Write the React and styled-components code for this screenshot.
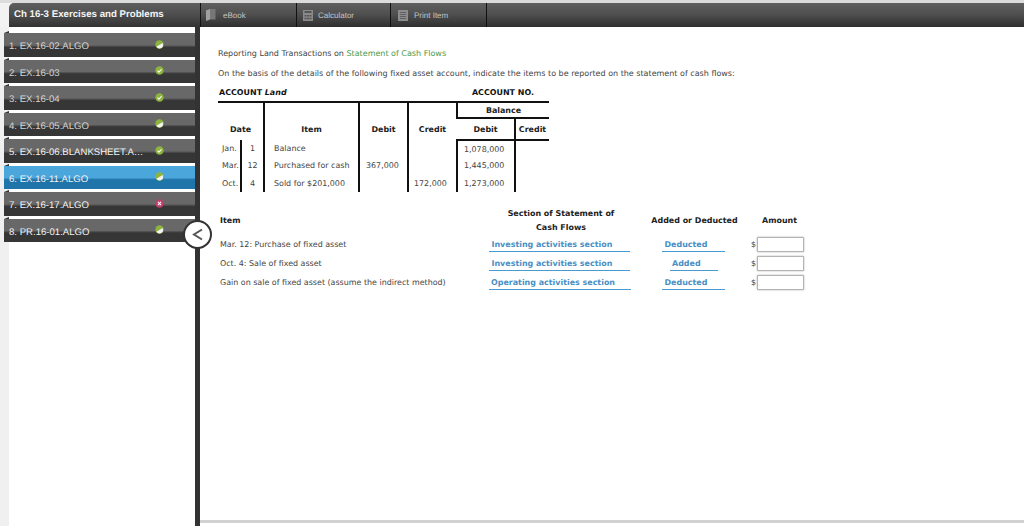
import React from "react";
import styled, { createGlobalStyle } from "styled-components";

const Global = createGlobalStyle`
  html, body { margin: 0; padding: 0; background: #fff; width: 1024px; height: 526px; overflow: hidden; text-rendering: geometricPrecision; }
  * { box-sizing: border-box; }
`;
const Page = styled.div`
  width: 1024px; height: 526px; display: flex; flex-direction: column;
  background: #fff; font-family: "DejaVu Sans", Verdana, sans-serif; color: #333;
`;
const TopStrip = styled.div`height: 3px; background: #dcdcdc; flex: none;`;
const HeaderRow = styled.div`
  height: 24px; flex: none; display: flex; padding-left: 9px; background: #f2f2f2;
`;
const CourseTitle = styled.div`
  width: 191px; border-radius: 5px 0 0 0; background: linear-gradient(#5f5f5f, #4f4f4f 45%, #333 100%);
  color: #f4f4f4; font: bold 9.700px/23px "Liberation Sans", Arial, sans-serif; padding-left: 5px; flex: none;
`;
const Toolbar = styled.div`
  flex: 1; display: flex; background: linear-gradient(#606060, #505050 45%, #2e2e2e 100%); border-left: 1px solid #111;
`;
const Tool = styled.div`
  width: ${p => p.$w}px; display: flex; align-items: center; gap: ${p => p.$gap}px; padding-left: ${p => p.$pad}px;
  border-right: 1px solid #111; color: #c4c4c4; font: 8px "Liberation Sans", Arial, sans-serif;
`;
const Body = styled.div`flex: 1; display: flex; min-height: 0; position: relative;`;
const Sidebar = styled.nav`
  width: 200px; flex: none; display: flex; flex-direction: column; border-right: 5px solid #333;
  background: linear-gradient(90deg, #f0f0f0 0 9px, #fff 9px);
  padding: 6px 0 0 4px; gap: 3px;
`;
const Row = styled.div`
  position: relative; height: 23.500px; flex: none; display: flex; align-items: center; padding: 4px 0 0 5px;
  font: 9.600px "Liberation Sans", Arial, sans-serif; color: ${p => p.$dim ? "#d4d4d4" : "#f2f2f2"};
  background: ${p => p.$active
    ? "linear-gradient(#4ba6dc 0 50%, #1f74aa 60% 100%)"
    : "linear-gradient(#686868 0 50%, #363636 60% 100%)"};
  &::before {
    content: ""; position: absolute; left: 0; top: -2px; width: 0; height: 0;
    border-style: solid; border-width: 0 0 2px 5px; border-color: transparent transparent #333 transparent;
  }
`;
const RowLabel = styled.span`flex: 1; white-space: nowrap; overflow: hidden;`;
const RowIcon = styled.svg`position: absolute; left: 151px; top: 6.500px; width: 9px; height: 9px;`;
const Collapse = styled.div`
  position: absolute; left: 183px; top: 193px; width: 29px; height: 29px; border-radius: 50%;
  background: #fff; border: 2px solid #333; display: flex; align-items: center; justify-content: center;
`;
const Main = styled.main`flex: 1; min-width: 0; display: flex; flex-direction: column;`;
const Content = styled.div`flex: 1; padding: 19px 0 0 18px; font-size: 7.950px;`;
const Para = styled.p`margin: 0 0 4px; line-height: 16px; height: 16px; color: #444; white-space: nowrap; font-size: 8px;`;
const Green = styled.span`color: #4c9a4c;`;
const AccountLine = styled.div`
  width: 331px; display: flex; justify-content: space-between; padding: 0 15px 0 1px; font-weight: bold; color: #111; line-height: 14px; height: 14px;
  em { font-style: italic; }
`;
const Ledger = styled.table`
  width: 331px; table-layout: fixed; border-collapse: collapse; margin-top: 1px; border-top: 2px solid #111;
  color: #444; font-size: 7.950px;
  th { font-weight: bold; color: #222; border-left: 2px solid #111; padding: 0; text-align: center; }
  th:first-child { border-left: none; }
  th[rowspan] { vertical-align: bottom; padding-bottom: 6px; }
  td { height: 17.300px; padding: 0; border-left: 2px solid #111; white-space: nowrap; }
  td:first-child { border-left: none; }
  thead tr:last-child th { border-bottom: 2px solid #111; }
`;
const HeadCell = styled.th`height: ${p => p.$h}px;`;
const SpanHead = styled.th`&&& { height: 16px; border-bottom: 2px solid #111; }`;
const Cell = styled.td`text-align: ${p => p.$a || "left"}; padding-left: ${p => p.$pl || 0}px !important;`;
const Answers = styled.table`
  width: 584px; table-layout: fixed; border-collapse: collapse; margin: 15px 0 0 2px; font-size: 7.950px; color: #444;
  th { font-weight: bold; color: #222; line-height: 14px; padding: 0; height: 28px; text-align: center; }
  td { height: 19px; padding: 0; text-align: center; white-space: nowrap; }
`;
const ItemHead = styled.th`&&& { text-align: left; }`;
const ItemCell = styled.td`&&& { text-align: left; }`;
const Answer = styled.span`
  display: inline-block; width: ${p => p.$w}px; margin-right: ${p => p.$mr}px; color: #4a8fc4; font-weight: bold; line-height: 13px; padding: 2px 0 0 2.500px;
  border-bottom: 1.500px solid #4a9ad2; text-align: left;
`;
const Amount = styled.div`display: flex; align-items: center; margin-left: -4px; color: #444;`;
const AmountInput = styled.div`width: 47px; height: 15px; margin-left: 1px; background: #fff; border: 1px solid #b4b4b4; border-radius: 1px; box-shadow: 0 0 1.500px #888;`;
const BottomLine = styled.div`height: 3px; flex: none; margin-bottom: 3px; background: #d2d2d2;`;

const items = ["1. EX.16-02.ALGO","2. EX.16-03","3. EX.16-04","4. EX.16-05.ALGO","5. EX.16-06.BLANKSHEET.A…","6. EX.16-11.ALGO","7. EX.16-17.ALGO","8. PR.16-01.ALGO"];
const statuses = ["part","ok","ok","part","ok","half","bad","part"];

const Status = ({ s }) => (
  <RowIcon viewBox="0 0 10 10">
    <circle cx="5" cy="5" r="4.600" fill={s === "bad" ? "#c0406a" : "#8db43e"} />
    {s === "bad" && <path d="M3.300 3.300l3.400 3.400M6.700 3.300L3.300 6.700" stroke="#fff" strokeWidth="1.200" />}
    {s === "ok" && <path d="M2.800 5.200l1.600 1.600L7.300 3.600" stroke="#fff" strokeWidth="1.200" fill="none" />}
    {(s === "part" || s === "half") && <path d="M1.400 7.600A4.600 4.600 0 0 0 9 7 L8.600 3.200Z" fill="#f2f2f2" />}
  </RowIcon>
);

export default function App() {
  return (
    <Page>
      <Global />
      <TopStrip />
      <HeaderRow>
        <CourseTitle>Ch 16-3 Exercises and Problems</CourseTitle>
        <Toolbar>
          <Tool $w={96} $gap={7} $pad={5}>
            <svg width="10" height="12" viewBox="0 0 10 12"><path d="M0 1.500L4 0v10.500L0 12z" fill="#a0a0a0"/><path d="M4 0h5.500v10.500H4z" fill="#777"/></svg>
            eBook
          </Tool>
          <Tool $w={94} $gap={5} $pad={6}>
            <svg width="10" height="11" viewBox="0 0 10 11"><rect width="10" height="11" fill="#8a8a8a"/><rect x="1.500" y="1" width="7" height="2" fill="#555"/><path d="M1.500 5h2v1.500h-2zM4 5h2v1.500H4zM6.500 5h2v1.500h-2zM1.500 7.800h2v1.500h-2zM4 7.800h2v1.500H4zM6.500 7.800h2v1.500h-2z" fill="#555"/></svg>
            Calculator
          </Tool>
          <Tool $w={96} $gap={6} $pad={7}>
            <svg width="10" height="11" viewBox="0 0 10 11"><rect width="10" height="11" fill="#8c8c8c"/><path d="M2 2.500h6M2 4.500h6M2 6.500h6M2 8.500h6" stroke="#555" strokeWidth="0.800"/></svg>
            Print Item
          </Tool>
        </Toolbar>
      </HeaderRow>
      <Body>
        <Sidebar>
          {items.map((t, i) => (
            <Row key={t} $active={i === 5} $dim={i < 4}>
              <RowLabel>{t}</RowLabel>
              <Status s={statuses[i]} />
            </Row>
          ))}
        </Sidebar>
        <Collapse>
          <svg width="11" height="13" viewBox="0 0 11 13"><path d="M10 1.500L2 6.500l8 5" fill="none" stroke="#555" strokeWidth="2"/></svg>
        </Collapse>
        <Main>
          <Content>
            <Para>Reporting Land Transactions on <Green>Statement of Cash Flows</Green></Para>
            <Para>On the basis of the details of the following fixed asset account, indicate the items to be reported on the statement of cash flows:</Para>
            <AccountLine>
              <span>ACCOUNT <em>Land</em></span>
              <span>ACCOUNT NO.</span>
            </AccountLine>
            <Ledger>
              <colgroup>
                <col style={{ width: 23 }} /><col style={{ width: 23 }} /><col style={{ width: 95 }} /><col style={{ width: 49 }} /><col style={{ width: 49 }} /><col style={{ width: 58 }} /><col style={{ width: 34 }} />
              </colgroup>
              <thead>
                <tr>
                  <th colSpan={2} rowSpan={2}>Date</th>
                  <th rowSpan={2}>Item</th>
                  <th rowSpan={2}>Debit</th>
                  <th rowSpan={2}>Credit</th>
                  <SpanHead colSpan={2}>Balance</SpanHead>
                </tr>
                <tr>
                  <HeadCell $h={22}>Debit</HeadCell>
                  <HeadCell $h={22}>Credit</HeadCell>
                </tr>
              </thead>
              <tbody>
                <tr><Cell $pl={4}>Jan.</Cell><Cell $a="center">1</Cell><Cell $pl={9}>Balance</Cell><Cell /><Cell /><Cell $pl={6}>1,078,000</Cell><Cell /></tr>
                <tr><Cell $pl={4}>Mar.</Cell><Cell $a="center">12</Cell><Cell $pl={9}>Purchased for cash</Cell><Cell $pl={6}>367,000</Cell><Cell /><Cell $pl={6}>1,445,000</Cell><Cell /></tr>
                <tr><Cell $pl={4}>Oct.</Cell><Cell $a="center">4</Cell><Cell $pl={9}>Sold for $201,000</Cell><Cell /><Cell $pl={5}>172,000</Cell><Cell $pl={6}>1,273,000</Cell><Cell /></tr>
              </tbody>
            </Ledger>
            <Answers>
              <colgroup>
                <col style={{ width: 268 }} /><col style={{ width: 146 }} /><col style={{ width: 121 }} /><col style={{ width: 49 }} />
              </colgroup>
              <thead>
                <tr>
                  <ItemHead>Item</ItemHead>
                  <th>Section of Statement of<br />Cash Flows</th>
                  <th>Added or Deducted</th>
                  <th>Amount</th>
                </tr>
              </thead>
              <tbody>
                <tr><ItemCell>Mar. 12: Purchase of fixed asset</ItemCell><td><Answer $w={141} $mr={3}>Investing activities section</Answer></td><td><Answer $w={63} $mr={2}>Deducted</Answer></td><td><Amount>$<AmountInput /></Amount></td></tr>
                <tr><ItemCell>Oct. 4: Sale of fixed asset</ItemCell><td><Answer $w={141} $mr={3}>Investing activities section</Answer></td><td><Answer $w={48} $mr={2}>Added</Answer></td><td><Amount>$<AmountInput /></Amount></td></tr>
                <tr><ItemCell>Gain on sale of fixed asset (assume the indirect method)</ItemCell><td><Answer $w={142} $mr={3}>Operating activities section</Answer></td><td><Answer $w={63} $mr={2}>Deducted</Answer></td><td><Amount>$<AmountInput /></Amount></td></tr>
              </tbody>
            </Answers>
          </Content>
          <BottomLine />
        </Main>
      </Body>
    </Page>
  );
}
